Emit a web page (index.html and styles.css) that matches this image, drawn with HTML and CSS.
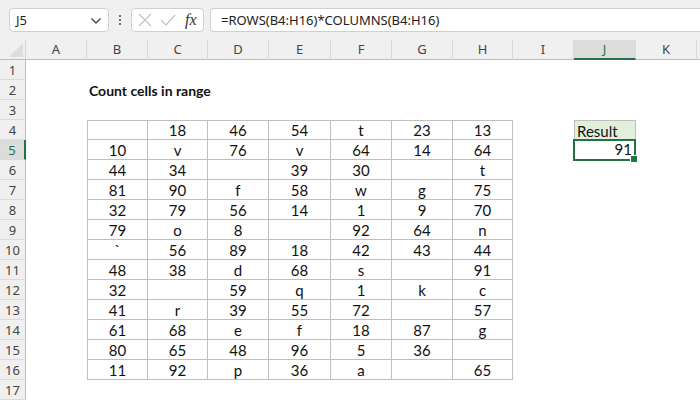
FILE: index.html
```html
<!DOCTYPE html>
<html>
<head>
<meta charset="utf-8">
<link rel="stylesheet" href="styles.css">
</head>
<body>
<div class="topbar">
  <div class="namebox"><span class="nb-text">J5</span>
    <svg class="chev" width="12" height="8" viewBox="0 0 12 8"><path d="M1.5 1.5 L6 6 L10.5 1.5" fill="none" stroke="#444" stroke-width="1.3"/></svg>
  </div>
  <div class="dots"><span></span><span></span><span></span></div>
  <div class="fxbox">
    <svg width="16" height="16" viewBox="0 0 16 16"><path d="M2 2 L14 14 M14 2 L2 14" stroke="#c4c4c4" stroke-width="1.3"/></svg>
    <svg width="18" height="16" viewBox="0 0 18 16"><path d="M2 8 L7 13 L16 3" fill="none" stroke="#c4c4c4" stroke-width="1.3"/></svg>
    <span class="fx">fx</span>
  </div>
  <div class="formula">=ROWS(B4:H16)*COLUMNS(B4:H16)</div>
</div>
<div class="sheet" id="sheet"></div>
<script src="app.js"></script>
</body>
</html>
```

FILE: app.js
```js
(function(){
  var s=document.getElementById('sheet');
  var cols=['A','B','C','D','E','F','G','H','I','J','K',''];
  var data={
    4:['','18','46','54','t','23','13'],
    5:['10','v','76','v','64','14','64'],
    6:['44','34','','39','30','','t'],
    7:['81','90','f','58','w','g','75'],
    8:['32','79','56','14','1','9','70'],
    9:['79','o','8','','92','64','n'],
    10:['`','56','89','18','42','43','44'],
    11:['48','38','d','68','s','','91'],
    12:['32','','59','q','1','k','c'],
    13:['41','r','39','55','72','','57'],
    14:['61','68','e','f','18','87','g'],
    15:['80','65','48','96','5','36',''],
    16:['11','92','p','36','a','','65']
  };
  function el(cls,txt){var d=document.createElement('div');d.className=cls;if(txt!==undefined)d.textContent=txt;s.appendChild(d);return d;}
  var c=el('corner');
  c.innerHTML='<svg width="14" height="14" viewBox="0 0 14 14"><path d="M14 0 L14 14 L0 14 Z" fill="#dcdcdc"/></svg>';
  cols.forEach(function(n){el('colh'+(n==='J'?' selh':'')+(n===''?' last':''),n);});
  for(var r=1;r<=17;r++){
    el('rowh'+(r===5?' selr':''),String(r));
    for(var ci=0;ci<12;ci++){
      var cls='cell',txt='';
      if(r===2&&ci===1){cls+=' title';txt='Count cells in range';}
      if(data[r]&&ci>=1&&ci<=7){
        cls+=' tb';txt=data[r][ci-1];
        if(r===4)cls+=' tt';
        if(ci===1)cls+=' tl';
      }
      if(r===4&&ci===9){cls+=' res';txt='Result';}
      if(r===5&&ci===9){cls+=' sel';txt='91';}
      var d=el(cls,txt);
      if(r===5&&ci===9){var h=document.createElement('span');h.className='handle';d.appendChild(h);}
    }
  }
})();
```

FILE: styles.css
```css
html,body{margin:0;padding:0;background:#fff;}
body{width:700px;height:400px;overflow:hidden;font-family:"Noto Sans","Open Sans",sans-serif;}
.topbar{height:40px;background:#f0f0f0;display:flex;align-items:flex-start;padding-top:8px;box-sizing:border-box;}
.namebox{margin-left:9px;width:100px;height:24px;box-sizing:border-box;background:#fff;border:1px solid #d0d0d0;border-radius:4px;display:flex;align-items:center;justify-content:space-between;padding:0 6px 0 6px;}
.nb-text{font-size:13px;color:#222;}
.chev{margin-top:1px;}
.dots{width:22px;height:24px;display:flex;flex-direction:column;align-items:center;justify-content:center;gap:2px;}
.dots span{width:2px;height:2px;background:#444;border-radius:1px;}
.fxbox{width:73px;height:24px;box-sizing:border-box;background:#fff;border:1px solid #d0d0d0;border-radius:4px;display:flex;align-items:center;padding-left:5px;gap:6px;}
.fx{font-family:"Liberation Serif",serif;font-style:italic;font-size:16px;color:#333;margin-left:2px;}
.formula{margin-left:6px;flex:1;height:24px;box-sizing:border-box;background:#fff;border:1px solid #d0d0d0;border-right:none;border-radius:4px 0 0 4px;font-size:13px;color:#222;padding-left:10px;line-height:22px;}
.sheet{display:grid;grid-template-columns:26px 61px 61px 60px 61px 62px 61px 61px 60px 61px 62px 61px 3px;grid-template-rows:20px repeat(17,20px);}
.corner{background:#f0f0f0;border-right:1px solid #d4d4d4;border-bottom:1px solid #bdbdbd;box-sizing:border-box;display:flex;align-items:flex-end;justify-content:flex-end;padding:0 2px 2px 0;}
.colh{background:#f0f0f0;border-right:1px solid #dadada;border-bottom:1px solid #bdbdbd;box-sizing:border-box;text-align:center;font-size:13px;color:#444;line-height:19px;}
.colh.last{border-right:none;}
.colh.selh{background:#dcdcdc;border-bottom:2px solid #217346;color:#217346;}
.rowh{background:#f0f0f0;border-right:1px solid #bdbdbd;border-bottom:1px solid #dadada;box-sizing:border-box;text-align:center;font-size:13px;color:#444;line-height:20px;}
.rowh.selr{background:#dcdcdc;border-right:2px solid #217346;color:#217346;}
.cell{font-family:"Lato","Open Sans",sans-serif;font-size:15px;color:#111;line-height:21px;white-space:nowrap;box-sizing:border-box;position:relative;}
.title{font-weight:bold;font-size:14px;padding-left:2px;overflow:visible;}
.tb{border-right:1px solid #bfbfbf;border-bottom:1px solid #bfbfbf;text-align:center;}
.tt{border-top:1px solid #bfbfbf;line-height:19px;}
.tl{border-left:1px solid #bfbfbf;}
.res{background:#e2efda;border:1px solid #bfbfbf;border-bottom:none;padding-left:2px;line-height:20px;}
.sel{border:2px solid #217346;text-align:right;padding-right:2px;line-height:17px;margin-left:-1px;margin-top:-1px;height:22px;width:63px;}
.handle{position:absolute;right:-4px;bottom:-4px;width:6px;height:6px;background:#217346;border:1px solid #fff;}
```
